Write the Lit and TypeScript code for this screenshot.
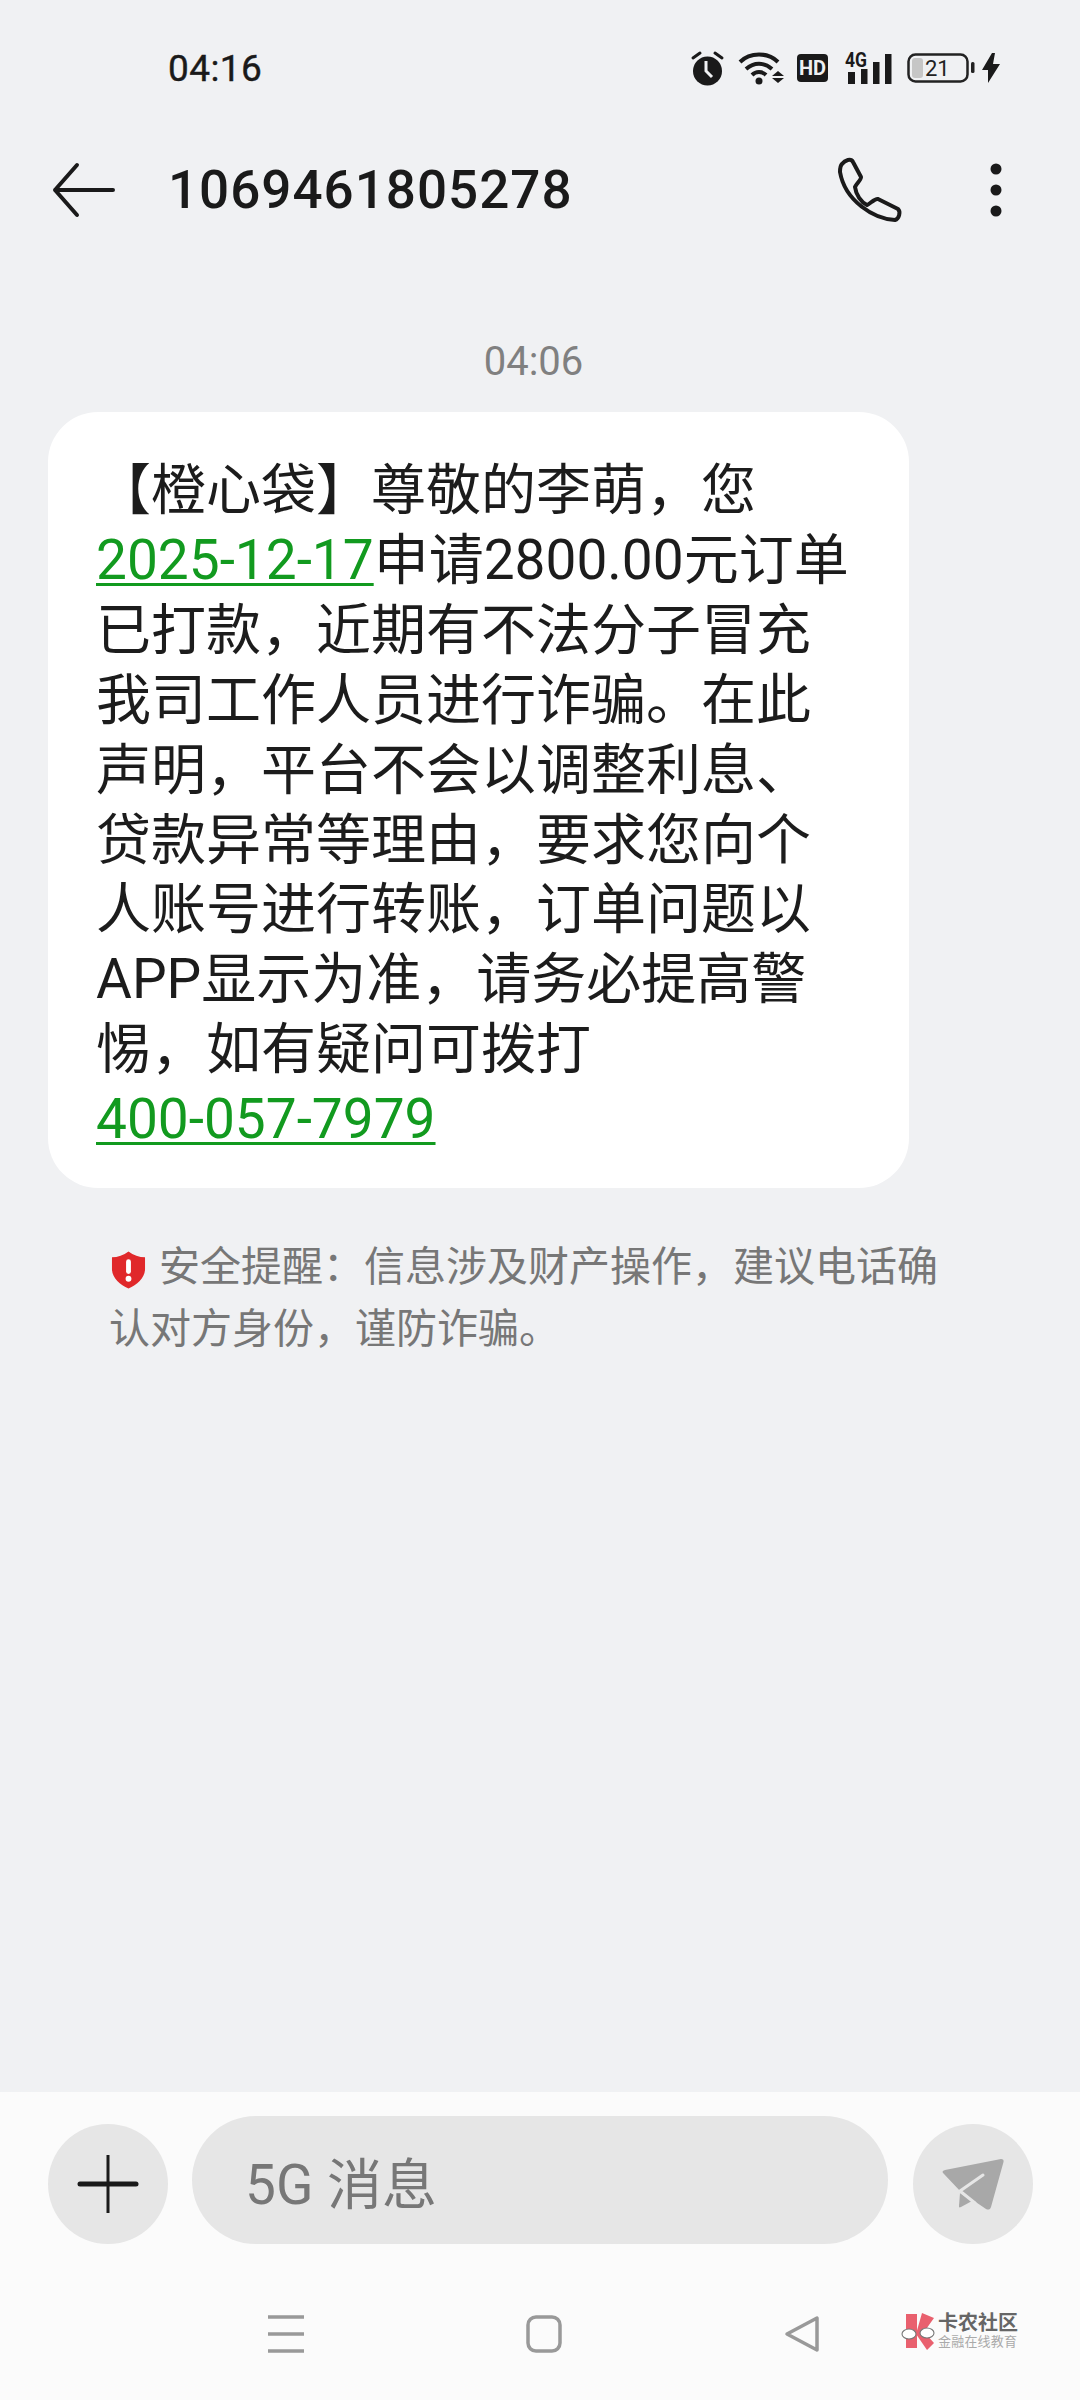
import { LitElement, html, css } from "lit";
import { customElement } from "lit/decorators.js";

@customElement("app-root")
export class AppRoot extends LitElement {
  static styles = css`
    :host { display: block; width: 1080px; height: 2400px; font-family: Roboto, "Noto Sans CJK SC", sans-serif; background: #f0f1f3; color: #1a1a1a; overflow: hidden; }
    .page { display: flex; flex-direction: column; height: 2400px; }
    svg { display: block; flex: none; overflow: visible; }
    .status { display: flex; align-items: center; height: 44px; margin-top: 46px; padding: 0 80px 0 168px; }
    .clock { font-size: 37px; font-weight: 400; flex: 1; letter-spacing: 0.4px; -webkit-text-stroke: 0.4px #1a1a1a; }
    .sicons { display: flex; align-items: center; }
    .gap16 { margin-right: 16px; }
    .gap13 { margin-right: 13px; }
    .gap17 { margin-right: 17px; }
    .gap15 { margin-right: 15px; }
    .gap7 { margin-right: 7px; }
    .header { display: flex; align-items: center; height: 70px; margin-top: 65px; padding: 0 0 0 51px; }
    .title { font-size: 53px; font-weight: 500; margin-left: 53px; flex: 1; letter-spacing: 1px; line-height: 70px; }
    .phone { margin-right: 88px; }
    .dots { margin-right: 78px; }
    .stamp { text-align: center; font-size: 40px; color: #808080; line-height: 46px; margin-top: 114px; padding-right: 13px; }
    .bubble { margin: 27px 0 0 48px; width: 861px; box-sizing: border-box; height: 776px; padding: 44px 0 0 48px; background: #fff; border-radius: 50px; font-size: 55px; line-height: 69.9px; color: #1c1c1c; }
    .bubble a { color: #129a1f; text-decoration: underline; text-decoration-thickness: 3px; text-underline-offset: 4px; }
    .notice { margin: 48px 0 0 0; padding: 0 120px 0 109px; font-size: 41px; line-height: 62px; color: #777; }
    .shield { display: inline-block; vertical-align: -8px; margin: 0 13px 0 2px; }
    .spacer { flex: 1; }
    .composer { background: #fbfbfb; height: 308px; flex: none; display: flex; flex-direction: column; }
    .row { display: flex; align-items: flex-end; height: 128px; margin-top: 24px; padding-left: 48px; }
    .round { width: 120px; height: 120px; border-radius: 50%; background: #e6e6e6; display: flex; align-items: center; justify-content: center; flex: none; }
    .input { width: 696px; height: 128px; box-sizing: border-box; margin: 0 25px 0 24px; border-radius: 64px; background: #e6e6e6; padding-left: 53px; font-size: 55px; color: #777; display: flex; align-items: center; flex: none; }
    .nav { display: flex; align-items: center; height: 40px; margin-top: 70px; padding-left: 268px; }
    .nav .sq { margin-left: 222px; }
    .nav .tri { margin-left: 222px; }
    .logo { display: flex; align-items: center; gap: 3px; margin: 0 0 6px 81px; }
    .brand { display: flex; flex-direction: column; }
    .brand b { font-size: 20px; line-height: 21px; font-weight: 700; color: #666; white-space: nowrap; }
    .brand span { font-size: 13px; line-height: 15px; letter-spacing: 0.2px; color: #aaa; white-space: nowrap; }
  `;

  render() {
    return html`<div class="page">
      <div class="status">
        <div class="clock">04:16</div>
        <div class="sicons">
          <svg class="gap16" width="31" height="34" viewBox="0 0 31 34">
            <circle cx="15.500" cy="20" r="14.500" fill="#1a1a1a"/>
            <path d="M1 7 L8 2 M30 7 L23 2" stroke="#1a1a1a" stroke-width="3" stroke-linecap="round"/>
            <path d="M14 10 V20 L20 26" stroke="#f0f1f3" stroke-width="3" fill="none"/>
          </svg>
          <svg class="gap13" width="45" height="34" viewBox="0 0 45 34">
            <path d="M1 11 C11 1 29 1 39 11 M7 18 C15 11 25 11 33 18 M13 24 C17 20 23 20 27 24" stroke="#1a1a1a" stroke-width="4" fill="none"/>
            <circle cx="20" cy="30" r="3.500" fill="#1a1a1a"/>
            <path d="M33 25 L39 20 L45 25 Z" fill="#1a1a1a"/>
            <path d="M33 27 L39 32 L45 27 Z" fill="#1a1a1a"/>
          </svg>
          <svg class="gap17" width="31" height="28" viewBox="0 0 31 28">
            <rect width="31" height="28" rx="4" fill="#1a1a1a"/>
            <text x="15.500" y="21" text-anchor="middle" font-family="Roboto" font-weight="700" font-size="20" fill="#f0f1f3">HD</text>
          </svg>
          <svg class="gap15" width="47" height="32" viewBox="0 0 47 32">
            <text x="0" y="14.500" font-family="Roboto" font-weight="700" font-size="20" fill="#1a1a1a" textLength="22" lengthAdjust="spacingAndGlyphs">4G</text>
            <rect x="3" y="20" width="7" height="12" fill="#1a1a1a"/>
            <rect x="16" y="17" width="6.500" height="15" fill="#1a1a1a"/>
            <rect x="28" y="10" width="6.500" height="22" fill="#1a1a1a"/>
            <rect x="40" y="2" width="6.500" height="30" fill="#1a1a1a"/>
          </svg>
          <svg class="gap7" width="68" height="30" viewBox="0 0 68 30">
            <rect x="1.500" y="1.500" width="59" height="27" rx="7" fill="none" stroke="#222" stroke-width="2.500"/>
            <rect x="5" y="5" width="11" height="20" rx="3" fill="#c6c6c6"/>
            <rect x="64" y="9" width="3.500" height="11" rx="1.500" fill="#222"/>
            <text x="18" y="23" font-family="Roboto" font-size="22" fill="#222">21</text>
          </svg>
          <svg width="18" height="30" viewBox="0 0 18 30"><path d="M10 0 L0 17 H6 L6 30 L18 11 H11 L13 0 Z" fill="#1a1a1a"/></svg>
        </div>
      </div>

      <div class="header">
        <svg width="64" height="54" viewBox="0 0 64 54">
          <path d="M26 2 L4 27 L26 52 M4 27 H62" stroke="#1a1a1a" stroke-width="4" fill="none" stroke-linecap="round" stroke-linejoin="round"/>
        </svg>
        <div class="title">1069461805278</div>
        <svg class="phone" width="64" height="64" viewBox="-1 -1 64 64">
          <path d="M3 5 C6 1 12 -1 14 3 L22 18 C23 20 17 25 16 28 C17 36 22 43 28 46 C31 45 36 39 39 40 L59 50 C62 53 60 60 56 61 C35 60 6 42 1 13 C1 10 1 7 3 5Z" stroke="#1a1a1a" stroke-width="4" fill="none" stroke-linejoin="round"/>
        </svg>
        <svg class="dots" width="12" height="54" viewBox="0 0 12 54">
          <circle cx="6" cy="6" r="5.500" fill="#1a1a1a"/>
          <circle cx="6" cy="27" r="5.500" fill="#1a1a1a"/>
          <circle cx="6" cy="48" r="5.500" fill="#1a1a1a"/>
        </svg>
      </div>

      <div class="stamp">04:06</div>

      <div class="bubble">
        【橙心袋】尊敬的李萌，您<br>
        <a>2025-12-17</a>申请2800.00元订单<br>
        已打款，近期有不法分子冒充<br>
        我司工作人员进行诈骗。在此<br>
        声明，平台不会以调整利息、<br>
        贷款异常等理由，要求您向个<br>
        人账号进行转账，订单问题以<br>
        APP显示为准，请务必提高警<br>
        惕，如有疑问可拨打<br>
        <a>400-057-7979</a>
      </div>

      <div class="notice">
        <svg class="shield" width="35" height="38" viewBox="0 0 36 38">
          <path d="M18 0 C23 4 29 6 35 6 V18 C35 27 27 34 18 38 C9 34 1 27 1 18 V6 C7 6 13 4 18 0Z" fill="#e0282a"/>
          <rect x="15.500" y="8" width="5" height="15" rx="2.500" fill="#fff"/>
          <circle cx="18" cy="28" r="3" fill="#fff"/>
        </svg>安全提醒：信息涉及财产操作，建议电话确认对方身份，谨防诈骗。
      </div>

      <div class="spacer"></div>

      <div class="composer">
        <div class="row">
          <div class="round">
            <svg width="56" height="58" viewBox="0 0 56 58">
              <path d="M28 0 V58" stroke="#1a1a1a" stroke-width="3"/>
              <path d="M0 29 H56" stroke="#1a1a1a" stroke-width="5" stroke-linecap="round"/>
            </svg>
          </div>
          <div class="input">5G 消息</div>
          <div class="round">
            <svg width="66" height="56" viewBox="0 0 66 56">
              <path d="M61 3 C63 3 64 4 63.500 6 L51 51 C50 54 48 54 46 53 L21 36 L4 18 C2 16 2 15 5 14 Z" fill="#a8a8a8"/>
              <path d="M20 37 L32 45 L21 51 C19 52 19 51 19 50 Z" fill="#a8a8a8"/>
              <path d="M43 19 L20 35 L35 47" stroke="#e6e6e6" stroke-width="3" fill="none" stroke-linecap="round" stroke-linejoin="round"/>
            </svg>
          </div>
        </div>
        <div class="nav">
          <svg width="36" height="38" viewBox="0 0 36 38">
            <path d="M0 2 H36 M0 19 H36 M0 36 H36" stroke="#999" stroke-width="3.500"/>
          </svg>
          <svg class="sq" width="36" height="38" viewBox="0 0 36 38">
            <rect x="2" y="2" width="32" height="34" rx="8" stroke="#999" stroke-width="3.500" fill="none"/>
          </svg>
          <svg class="tri" width="36" height="38" viewBox="0 0 36 38">
            <path d="M33 3 V35 L3 19 Z" stroke="#999" stroke-width="3.500" fill="none" stroke-linejoin="round"/>
          </svg>
          <div class="logo">
            <svg width="34" height="38" viewBox="0 0 34 38">
              <path d="M5 2 H16 V36 H5 Z M21 1 L33 6 L23 20 L33 31 L26 38 L15 22 Z" fill="#e9606e"/>
              <ellipse cx="8" cy="22" rx="7" ry="5" fill="#fff" stroke="#777" stroke-width="1.100"/>
              <ellipse cx="26" cy="21" rx="7" ry="5" fill="#fff" stroke="#777" stroke-width="1.100"/>
            </svg>
            <div class="brand"><b>卡农社区</b><span>金融在线教育</span></div>
          </div>
        </div>
      </div>
    </div>`;
  }
}
